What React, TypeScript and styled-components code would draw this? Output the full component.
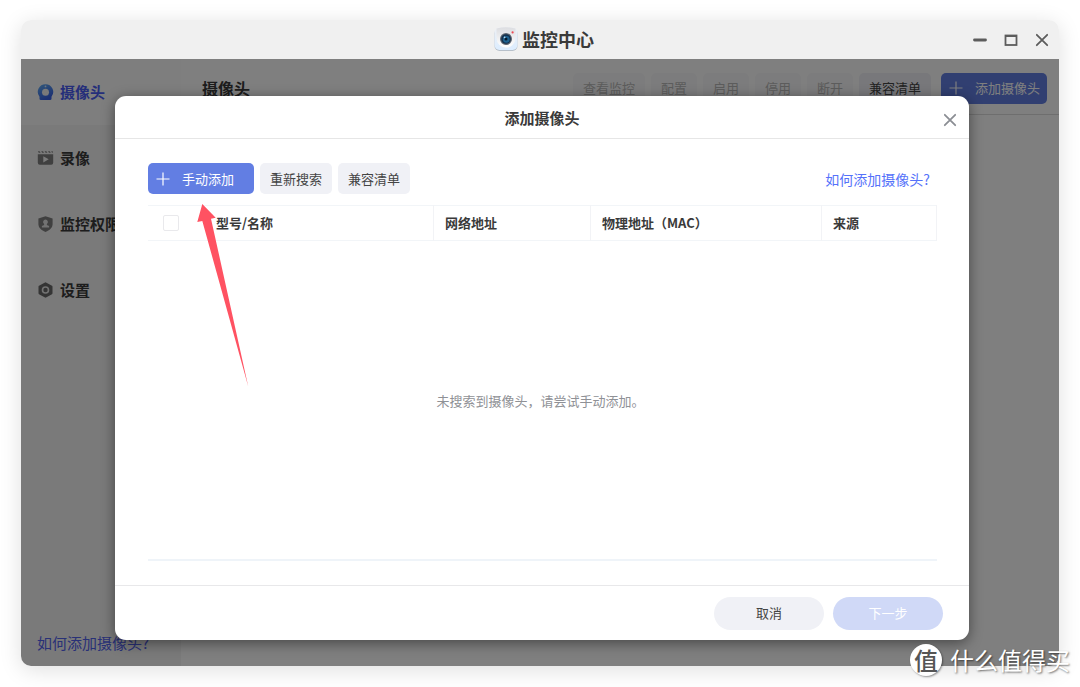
import React from "react";
import styled, { createGlobalStyle, css } from "styled-components";

const GlobalStyle = createGlobalStyle`
  *, *::before, *::after { box-sizing: border-box; }
  body {
    margin: 0;
    background: #fff;
    color: #3a3a3a;
    font-family: "Noto Sans CJK SC", sans-serif;
    font-size: 13px;
    line-height: 20px;
  }
  button { font: inherit; border: 0; margin: 0; padding: 0; background: none; }
  h1, h2, p { margin: 0; font-size: inherit; }
`;

const Page = styled.div`
  position: relative;
  display: flex;
  min-height: 100vh;
  padding: 20px 21px 21px;
  overflow: hidden;
`;

const AppWindow = styled.div`
  flex: 1;
  display: flex;
  flex-direction: column;
  border-radius: 10px;
  overflow: hidden;
  box-shadow: 0 4px 22px rgba(0, 0, 0, 0.13);
`;

const TitleBar = styled.header`
  display: grid;
  grid-template-columns: 1fr auto 1fr;
  align-items: center;
  height: 39px;
  padding: 0 9px 2px 17px;
  background: #f0f0f0;
`;

const AppTitle = styled.h1`
  grid-column: 2;
  display: flex;
  align-items: center;
  gap: 4px;
  font-size: 18px;
  font-weight: 700;
`;

const WindowControls = styled.div`
  justify-self: end;
  display: flex;
  gap: 15px;
  padding-top: 2px;
`;

const IconButton = styled.button`
  display: flex;
  color: #5c5c5c;
`;

const Workspace = styled.div`
  position: relative;
  flex: 1;
  display: flex;
  background: #fff;
`;

const Sidebar = styled.nav`
  display: flex;
  flex-direction: column;
  width: 160px;
  background: #f4f4f4;
`;

const NavItem = styled.a<{ $active?: boolean }>`
  display: flex;
  align-items: center;
  gap: 6px;
  height: 66px;
  padding-left: 16px;
  font-size: 15px;
  font-weight: 700;
  text-decoration: none;
  color: ${(p) => (p.$active ? "#4a5cf5" : "#3a3a3a")};
  background: ${(p) => (p.$active ? "#fcfcfc" : "transparent")};
`;

const HelpLink = styled.a<{ $sidebar?: boolean }>`
  color: #5572fa;
  font-size: 14px;
  text-decoration: none;
  ${(p) =>
    p.$sidebar &&
    css`
      margin-top: auto;
      padding: 0 0 13px 16px;
      color: #5262ee;
      font-size: 15px;
      white-space: nowrap;
    `}
`;

const Main = styled.main`
  flex: 1;
  background: #fff;
`;

const MainHeader = styled.div`
  display: flex;
  align-items: center;
  justify-content: space-between;
  height: 56px;
  padding: 3px 12px 0 21px;
  border-bottom: 1px solid #dcdcdc;
`;

const SectionTitle = styled.h2`
  font-size: 16px;
  font-weight: 700;
`;

const Toolbar = styled.div`
  display: flex;
  gap: 6px;
`;

const MainToolbar = styled(Toolbar)`
  & > :last-child { margin-left: 4px; }
`;

const Button = styled.button`
  height: 31px;
  padding: 0 10px;
  border-radius: 5px;
  background: #f0f1f6;
  color: #444;
  white-space: nowrap;
  &:disabled { background: #f9f9fa; color: #b8b8b8; }
`;

const PrimaryButton = styled(Button)`
  display: flex;
  align-items: center;
  gap: 12px;
  min-width: 106px;
  padding: 0 6px 0 8px;
  background: #627ee3;
  color: #fff;
`;

const Overlay = styled.div`
  position: absolute;
  inset: 0;
  display: flex;
  padding: 37px 90px 26px 94px;
  background: rgba(0, 0, 0, 0.5);
`;

const Dialog = styled.section`
  position: relative;
  flex: 1;
  display: flex;
  flex-direction: column;
  border-radius: 11px;
  background: #fff;
  box-shadow: 0 3px 14px rgba(0, 0, 0, 0.45);
`;

const DialogHeader = styled.div`
  display: grid;
  grid-template-columns: 1fr auto 1fr;
  align-items: center;
  height: 43px;
  padding: 2px 11px 0;
  border-bottom: 1px solid #e6e6e6;
  & > button { justify-self: end; padding-top: 3px; color: #8b8e94; }
`;

const DialogTitle = styled.h2`
  grid-column: 2;
  font-size: 15px;
  font-weight: 700;
`;

const DialogBody = styled.div`
  flex: 1;
  display: flex;
  flex-direction: column;
  padding: 24px 32px 24px 33px;
`;

const DialogTools = styled.div`
  display: flex;
  align-items: center;
  justify-content: space-between;
  padding-right: 7px;
  margin-bottom: 11px;
`;

const CameraTable = styled.table`
  width: 100%;
  table-layout: fixed;
  border-collapse: collapse;
  border-top: 1px solid #f2f5f8;
  border-bottom: 1px solid #f2f5f8;
`;

const HeadCell = styled.th<{ $width?: number; $line?: boolean }>`
  width: ${(p) => (p.$width ? `${p.$width}px` : "auto")};
  height: 35px;
  padding: 0 11px;
  text-align: left;
  font-weight: 700;
  border-right: ${(p) => (p.$line ? "1px solid #f2f3f6" : "0")};
`;

const CheckBox = styled.input`
  appearance: none;
  display: block;
  width: 16px;
  height: 16px;
  margin: 0 0 0 4px;
  border: 1px solid #e9e9ec;
  border-radius: 2px;
  background: #fff;
`;

const EmptyState = styled.div`
  flex: 1;
  display: flex;
  align-items: center;
  justify-content: center;
  padding: 2px 4px 0 0;
  color: #8f9196;
  border-bottom: 2px solid #eff4f9;
`;

const DialogFooter = styled.div`
  display: flex;
  align-items: center;
  justify-content: flex-end;
  gap: 9px;
  height: 55px;
  padding-right: 26px;
  border-top: 1px solid #e8e8ea;
`;

const PillButton = styled(Button)`
  width: 110px;
  height: 33px;
  border-radius: 17px;
  &:disabled { background: #d0d9f7; color: #fff; }
`;

const Arrow = styled.svg`
  position: absolute;
  left: 82px;
  top: 108px;
  pointer-events: none;
`;

const Watermark = styled.div`
  position: absolute;
  right: 10px;
  bottom: 11px;
  display: flex;
  align-items: center;
  gap: 8px;
  color: #fff;
  font-size: 24px;
  line-height: 32px;
  text-shadow: 1px 1px 2px rgba(0, 0, 0, 0.55);
`;

const WatermarkBadge = styled.span`
  display: flex;
  align-items: center;
  justify-content: center;
  width: 32px;
  height: 32px;
  border-radius: 50%;
  background: #fff;
  color: #555;
  font-weight: 500;
  text-shadow: none;
  box-shadow: 1px 1px 2px rgba(0, 0, 0, 0.4);
`;

const AppLogo = () => (
  <svg width="24" height="24" viewBox="0 0 24 24" aria-hidden="true">
    <defs>
      <linearGradient id="logoBase" x1="0" y1="0" x2="0" y2="1">
        <stop offset="0" stopColor="#edf0f5" />
        <stop offset="1" stopColor="#dcedff" />
      </linearGradient>
      <linearGradient id="logoBody" x1="0" y1="0" x2="0" y2="1">
        <stop offset="0" stopColor="#dcdde1" />
        <stop offset="1" stopColor="#ffffff" />
      </linearGradient>
    </defs>
    <rect x="0.5" y="1.5" width="23" height="22.5" rx="5" fill="#b7c0ca" />
    <rect x="0.5" y="0.5" width="23" height="22.5" rx="5" fill="url(#logoBase)" />
    <path d="M2.5 1.5Q12 -1 21.5 1.5V11a9.5 9.5 0 0 1-19 0Z" fill="url(#logoBody)" />
    <circle cx="12" cy="12" r="6" fill="#5a626e" />
    <circle cx="12" cy="12" r="4.8" fill="#12314f" />
    <circle cx="12.3" cy="12.3" r="3.4" fill="#1e6290" />
    <circle cx="12" cy="12" r="1.5" fill="#071a2c" />
    <circle cx="10.6" cy="10.3" r="0.9" fill="#b9dcf2" />
    <circle cx="18.6" cy="5.4" r="1.1" fill="#ee4b55" />
  </svg>
);

const CloseIcon = () => (
  <svg width="16" height="16" viewBox="0 0 16 16" fill="none" stroke="currentColor" strokeWidth="1.8" strokeLinecap="round" aria-hidden="true">
    <path d="M2.8 2.8 13.2 13.2M13.2 2.8 2.8 13.2" />
  </svg>
);

const PlusIcon = () => (
  <svg width="14" height="14" viewBox="0 0 14 14" fill="none" stroke="currentColor" strokeWidth="1.2" aria-hidden="true">
    <path d="M7 .5v13M.5 7h13" />
  </svg>
);

const CameraIcon = () => (
  <svg width="17" height="16" viewBox="0 0 17 16" aria-hidden="true">
    <defs>
      <linearGradient id="cameraFill" x1="0" y1="0" x2="0.5" y2="1">
        <stop offset="0" stopColor="#62b0f5" />
        <stop offset="1" stopColor="#3a62e6" />
      </linearGradient>
    </defs>
    <path
      fill="url(#cameraFill)"
      d="M8.500 .2a7.700 7.700 0 0 1 6 12.500v2.100c0 .7-.4 1.100-1.100 1.100H3.600c-.7 0-1.100-.4-1.100-1.100v-2.100A7.700 7.700 0 0 1 8.500 .2Z"
    />
    <circle cx="8.5" cy="2.4" r="0.9" fill="#d8ecff" />
    <circle cx="8.500" cy="8.2" r="3.5" fill="#f4f4f4" />
  </svg>
);

const VideoIcon = () => (
  <svg width="17" height="16" viewBox="0 0 17 16" fill="#808080" aria-hidden="true">
    <path d="M.8 1.200h1.800l1 1.600H1.800zM4.200 1.200H6l1 1.600H5.200zM7.600 1.200h1.800l1 1.600H8.600zM11 1.200h1.800l1 1.600H12zM14.200 1.200h1.600v1.600h-.8z" />
    <path fillRule="evenodd" d="M.8 4.200h15.400v8.600a2 2 0 0 1-2 2H2.800a2 2 0 0 1-2-2zM6.300 6.200v6.200l5.400-3.100z" />
  </svg>
);

const ShieldIcon = () => (
  <svg width="17" height="16" viewBox="0 0 17 16" aria-hidden="true">
    <path d="M8.500 .2 15.600 2.400V8c0 3.800-3 6.500-7.100 7.900C4.400 14.500 1.400 11.800 1.400 8V2.400Z" fill="#808080" />
    <path d="M8.500 3.400a2.500 2.500 0 0 1 1.400 4.500v1l2.200 1.100v1.400H4.900V10l2.200-1.100v-1A2.500 2.500 0 0 1 8.500 3.400Z" fill="#e4e4e4" />
  </svg>
);

const SettingsIcon = () => (
  <svg width="17" height="16" viewBox="0 0 17 16" aria-hidden="true">
    <path d="M8.500 1.300 14.500 4.700v6.600l-6 3.400-6-3.400V4.700Z" fill="#6a6a6a" stroke="#6a6a6a" strokeWidth="2" strokeLinejoin="round" />
    <circle cx="8.500" cy="8" r="3" fill="#6a6a6a" stroke="#e6e6e6" strokeWidth="1.600" />
  </svg>
);

const navItems = [
  { label: "摄像头", icon: <CameraIcon />, active: true },
  { label: "录像", icon: <VideoIcon /> },
  { label: "监控权限", icon: <ShieldIcon /> },
  { label: "设置", icon: <SettingsIcon /> },
];

export default function App() {
  return (
    <Page>
      <GlobalStyle />
      <AppWindow>
        <TitleBar>
          <AppTitle>
            <AppLogo />
            监控中心
          </AppTitle>
          <WindowControls>
            <IconButton aria-label="最小化">
              <svg width="16" height="16" viewBox="0 0 16 16" aria-hidden="true">
                <path d="M2.500 8h11" stroke="currentColor" strokeWidth="2.800" strokeLinecap="round" />
              </svg>
            </IconButton>
            <IconButton aria-label="最大化">
              <svg width="16" height="16" viewBox="0 0 16 16" aria-hidden="true">
                <rect x="2.500" y="3.500" width="11" height="9.500" fill="none" stroke="currentColor" strokeWidth="1.800" />
                <path d="M2 4h12" stroke="currentColor" strokeWidth="2.200" />
              </svg>
            </IconButton>
            <IconButton aria-label="关闭">
              <CloseIcon />
            </IconButton>
          </WindowControls>
        </TitleBar>

        <Workspace>
          <Sidebar>
            {navItems.map((item) => (
              <NavItem key={item.label} href="#" $active={item.active}>
                {item.icon}
                {item.label}
              </NavItem>
            ))}
            <HelpLink href="#" $sidebar>如何添加摄像头?</HelpLink>
          </Sidebar>

          <Main>
            <MainHeader>
              <SectionTitle>摄像头</SectionTitle>
              <MainToolbar>
                {["查看监控", "配置", "启用", "停用", "断开"].map((label) => (
                  <Button key={label} disabled>{label}</Button>
                ))}
                <Button>兼容清单</Button>
                <PrimaryButton>
                  <PlusIcon />
                  添加摄像头
                </PrimaryButton>
              </MainToolbar>
            </MainHeader>
          </Main>

          <Overlay>
            <Dialog role="dialog" aria-labelledby="dialog-title">
              <DialogHeader>
                <DialogTitle id="dialog-title">添加摄像头</DialogTitle>
                <IconButton aria-label="关闭对话框">
                  <CloseIcon />
                </IconButton>
              </DialogHeader>
              <DialogBody>
                <DialogTools>
                  <Toolbar>
                    <PrimaryButton>
                      <PlusIcon />
                      手动添加
                    </PrimaryButton>
                    <Button>重新搜索</Button>
                    <Button>兼容清单</Button>
                  </Toolbar>
                  <HelpLink href="#">如何添加摄像头?</HelpLink>
                </DialogTools>
                <CameraTable>
                  <thead>
                    <tr>
                      <HeadCell $width={57}>
                        <CheckBox type="checkbox" aria-label="全选" />
                      </HeadCell>
                      <HeadCell $line>型号/名称</HeadCell>
                      <HeadCell $width={157} $line>网络地址</HeadCell>
                      <HeadCell $width={231} $line>物理地址（MAC）</HeadCell>
                      <HeadCell $width={115} $line>来源</HeadCell>
                    </tr>
                  </thead>
                </CameraTable>
                <EmptyState>
                  <p>未搜索到摄像头，请尝试手动添加。</p>
                </EmptyState>
              </DialogBody>
              <DialogFooter>
                <PillButton>取消</PillButton>
                <PillButton disabled>下一步</PillButton>
              </DialogFooter>
              <Arrow width="52" height="184" viewBox="0 0 52 184" aria-hidden="true">
                <path d="M5.300 0 .3 18l5-1 46 165.700L14 14.700l4.700-1Z" fill="#ff5262" />
              </Arrow>
            </Dialog>
          </Overlay>
        </Workspace>
      </AppWindow>
      <Watermark>
        <WatermarkBadge>值</WatermarkBadge>
        什么值得买
      </Watermark>
    </Page>
  );
}
